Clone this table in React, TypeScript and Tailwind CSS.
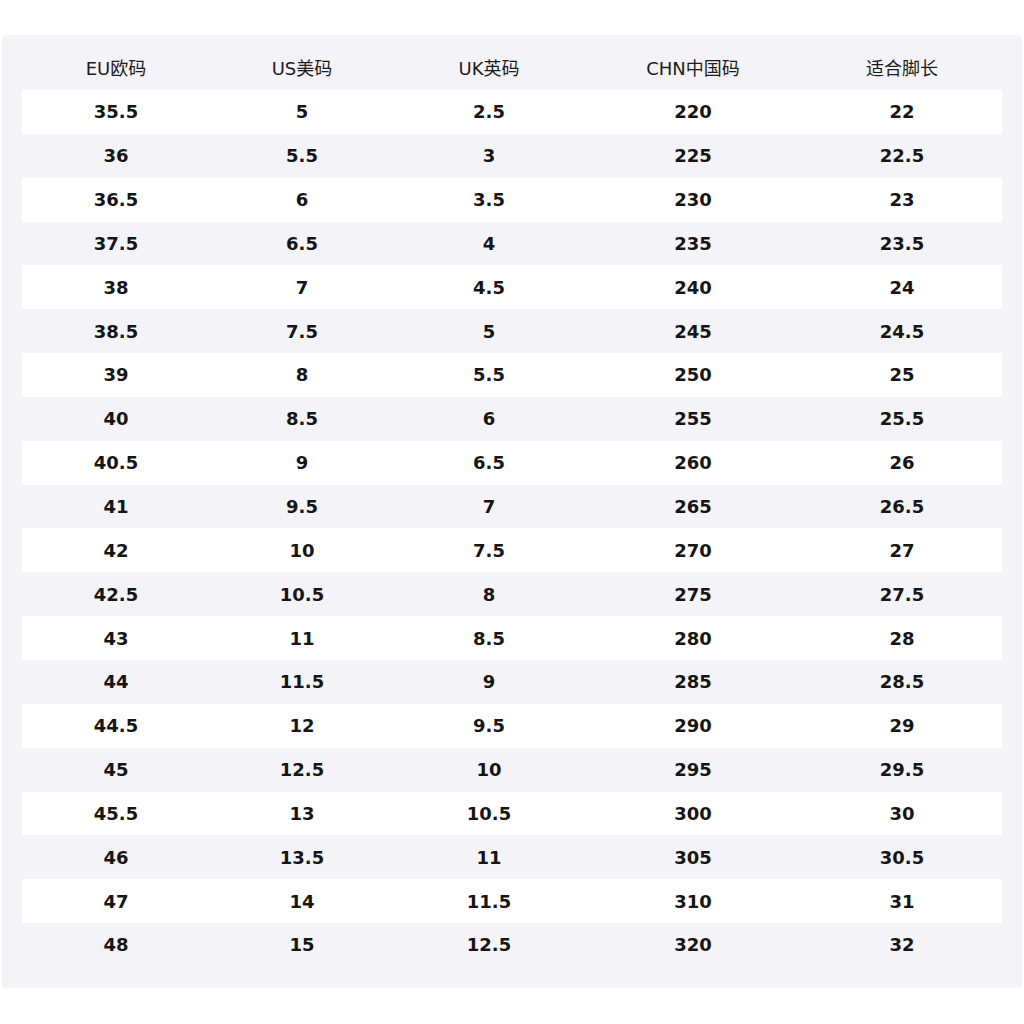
import React from "react";

const headers = ["EU欧码", "US美码", "UK英码", "CHN中国码", "适合脚长"];

const rows = [
  ["35.5", "5", "2.5", "220", "22"],
  ["36", "5.5", "3", "225", "22.5"],
  ["36.5", "6", "3.5", "230", "23"],
  ["37.5", "6.5", "4", "235", "23.5"],
  ["38", "7", "4.5", "240", "24"],
  ["38.5", "7.5", "5", "245", "24.5"],
  ["39", "8", "5.5", "250", "25"],
  ["40", "8.5", "6", "255", "25.5"],
  ["40.5", "9", "6.5", "260", "26"],
  ["41", "9.5", "7", "265", "26.5"],
  ["42", "10", "7.5", "270", "27"],
  ["42.5", "10.5", "8", "275", "27.5"],
  ["43", "11", "8.5", "280", "28"],
  ["44", "11.5", "9", "285", "28.5"],
  ["44.5", "12", "9.5", "290", "29"],
  ["45", "12.5", "10", "295", "29.5"],
  ["45.5", "13", "10.5", "300", "30"],
  ["46", "13.5", "11", "305", "30.5"],
  ["47", "14", "11.5", "310", "31"],
  ["48", "15", "12.5", "320", "32"],
];

const cols = "grid grid-cols-[188px_184px_190px_218px_200px]";

const App = () => {
  return (
    <div
      className="w-[1024px] h-[1024px] bg-white pt-[35px]"
      style={{ fontFamily: '"DejaVu Sans", "Noto Sans CJK SC", sans-serif' }}
    >
      <div className="mx-[2px] h-[953px] rounded-sm bg-[#f3f3f8] px-5 pt-[11px]">
        <div className={`${cols} h-[44px] items-center text-[18px] text-[#1c1c1c]`}>
          {headers.map((h) => (
            <div key={h} className="text-center">
              {h}
            </div>
          ))}
        </div>
        {rows.map((row, i) => (
          <div
            key={row[0]}
            className={`${cols} h-[43.85px] items-center text-[18px] font-bold text-[#151515] ${
              i % 2 === 0 ? "bg-white" : ""
            }`}
          >
            {row.map((v, j) => (
              <div key={j} className="text-center">
                {v}
              </div>
            ))}
          </div>
        ))}
      </div>
    </div>
  );
};

export default App;
